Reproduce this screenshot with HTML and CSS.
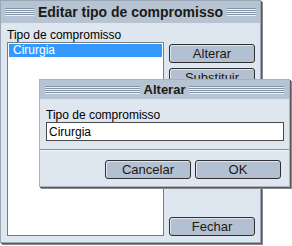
FILE: index.html
```html
<!DOCTYPE html>
<html lang="pt">
<head>
    <meta charset="UTF-8">
    <title>Editar tipo de compromisso</title>
    <link rel="stylesheet" href="styles.css">
</head>
<body>
    <div class="window">
        <div class="titlebar">
            <span class="stripes"></span>
            <span class="title-text">Editar tipo de compromisso</span>
            <span class="stripes"></span>
        </div>
        <div class="window-body">
            <label class="field-label">Tipo de compromisso</label>
            <span></span>
            <ul class="listbox">
                <li class="selected">Cirurgia</li>
            </ul>
            <div class="side-buttons">
                <button class="btn">Alterar</button>
                <button class="btn">Substituir</button>
                <button class="btn push-bottom">Fechar</button>
            </div>
        </div>
    </div>

    <div class="dialog">
        <div class="titlebar small">
            <span class="stripes"></span>
            <span class="title-text">Alterar</span>
            <span class="stripes"></span>
        </div>
        <div class="dialog-body">
            <label class="field-label" for="tipo">Tipo de compromisso</label>
            <input type="text" id="tipo" class="text-input" value="Cirurgia">
        </div>
        <div class="dialog-footer">
            <button class="btn">Cancelar</button>
            <button class="btn">OK</button>
        </div>
    </div>
</body>
</html>
```

FILE: styles.css
```css
body {
    margin: 0;
    padding: 0;
    background-color: #ffffff;
    font-family: "Liberation Sans", Arial, sans-serif;
    font-size: 12px;
    color: #000000;
    position: relative;
    width: 292px;
    height: 246px;
    overflow: hidden;
}

.window {
    box-sizing: border-box;
    width: 261px;
    height: 243px;
    background-color: #dee6ef;
    border: 1px solid #9aa6b3;
    box-shadow: 1px 1px 0 #5a5a5a, 2px 2px 0 #8a8a8a;
    display: flex;
    flex-direction: column;
}

.titlebar {
    display: flex;
    align-items: center;
    gap: 4px;
    height: 22px;
    padding: 0 4px;
    background-color: #b5c3d3;
}

.titlebar.small {
    height: 19px;
    padding: 0 5px;
}

.stripes {
    flex: 1;
    height: 8px;
    background: repeating-linear-gradient(#8393a5 0 1px, #eef2f6 1px 2px);
}

.title-text {
    font-weight: bold;
    font-size: 14px;
    color: #1c1a14;
}

.titlebar.small .title-text {
    font-size: 13px;
}

.window-body {
    flex: 1;
    display: grid;
    grid-template-columns: 157px 86px;
    grid-template-rows: 14px 1fr;
    column-gap: 5px;
    padding: 5px 6px 6px 6px;
}

.field-label {
    display: block;
    line-height: 14px;
}

.listbox {
    margin: 0;
    padding: 1px;
    list-style: none;
    background-color: #ffffff;
    border: 1px solid #7c7c7c;
}

.listbox li {
    padding: 0 4px;
    line-height: 13px;
}

.listbox li.selected {
    background-color: #3399ff;
    color: #ffffff;
}

.side-buttons {
    display: flex;
    flex-direction: column;
    gap: 5px;
    padding-top: 2px;
}

.push-bottom {
    margin-top: auto;
}

.btn {
    box-sizing: border-box;
    width: 86px;
    height: 19px;
    padding: 0;
    font-family: "Liberation Sans", Arial, sans-serif;
    font-size: 13px;
    color: #1c1a14;
    background-color: #b2c0d1;
    border: 1px solid #2e2e2e;
    border-radius: 3px;
    box-shadow: inset 1px 1px 0 #dfe6ee;
}

.dialog {
    position: absolute;
    left: 39px;
    top: 79px;
    box-sizing: border-box;
    width: 251px;
    height: 108px;
    background-color: #dee6ef;
    border: 1px solid #a7b2be;
    box-shadow: 1px 1px 0 #5a5a5a, 2px 2px 0 #8a8a8a;
}

.dialog-body {
    padding: 10px 6px 8px 6px;
}

.dialog-body .field-label {
    line-height: 13px;
}

.text-input {
    box-sizing: border-box;
    display: block;
    width: 238px;
    height: 19px;
    margin: 0;
    padding: 0 2px;
    font-family: "Liberation Sans", Arial, sans-serif;
    font-size: 12px;
    background-color: #ffffff;
    border: 1px solid #4a4a4a;
    border-radius: 0;
    outline: none;
}

.dialog-footer {
    display: flex;
    justify-content: flex-end;
    gap: 4px;
    padding: 10px 8px 0 0;
    border-top: 1px solid #8c8c8c;
    box-shadow: inset 0 1px 0 #f4f7fa;
}
```
